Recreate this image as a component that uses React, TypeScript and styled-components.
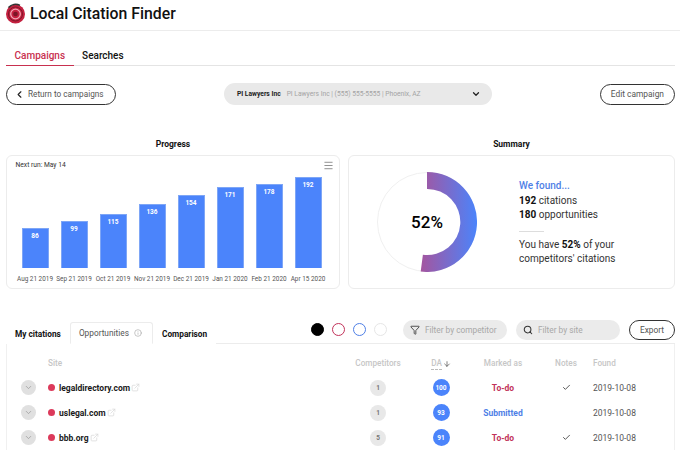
import styled, { createGlobalStyle } from 'styled-components'
import {
  ArrowDown,
  Check,
  ChevronDown,
  ChevronLeft,
  ExternalLink,
  Filter,
  Info,
  Menu,
  Search,
} from 'lucide-react'

const GlobalStyle = createGlobalStyle`
  html, body {
    margin: 0;
    padding: 0;
    height: 450px;
    overflow: hidden;
    background: #fff;
  }
  * {
    box-sizing: border-box;
  }
  body {
    font-family: Roboto, "Liberation Sans", sans-serif;
    color: #111;
  }
`

const Page = styled.div`
  width: 680px;
  height: 450px;
  overflow: hidden;
`

const Header = styled.header`
  height: 31px;
  padding: 0 0 3px 6px;
  display: flex;
  align-items: center;
  gap: 5px;
  border-bottom: 1px solid #ececec;
`

const Title = styled.h1`
  margin: 0 0 1px;
  font-size: 15.8px;
  font-weight: 500;
  color: #111;
`

const Main = styled.main`
  padding: 0 5px 0 6px;
`

const NavTabs = styled.nav`
  margin-top: 15px;
  height: 20px;
  display: flex;
  border-bottom: 1px solid #e4e4e4;
`

const NavTab = styled.div<{ $active?: boolean }>`
  padding: 0 8.5px;
  height: 20px;
  line-height: 20px;
  font-size: 10px;
  font-weight: 500;
  color: ${(p) => (p.$active ? '#c8304f' : '#111')};
  border-bottom: ${(p) => (p.$active ? '1px solid #c8304f' : 'none')};
`

const Toolbar = styled.div`
  margin-top: 17px;
  display: flex;
  align-items: center;
  justify-content: space-between;
`

const OutlineButton = styled.button`
  height: 21px;
  padding: 0 10px;
  display: flex;
  align-items: center;
  gap: 6px;
  border: 1px solid #333;
  border-radius: 11px;
  background: #fff;
  font-family: inherit;
  font-size: 8.4px;
  color: #555;
`

const BackButton = styled(OutlineButton)`
  width: 110px;
  padding: 0 0 0 7px;
  gap: 3px;
  font-size: 8.2px;
`

const CampaignSelect = styled.div`
  width: 268px;
  height: 22px;
  padding: 0 11px 0 13px;
  display: flex;
  align-items: center;
  gap: 6px;
  border-radius: 11px;
  background: #e9e9e9;
  font-size: 6.7px;
`

const CampaignName = styled.span`
  font-weight: 700;
  color: #222;
`

const CampaignInfo = styled.span`
  flex: 1;
  color: #a4a4a4;
`

const Panels = styled.section`
  margin-top: 34px;
  display: grid;
  grid-template-columns: 334px 327px;
  column-gap: 8px;
`

const Panel = styled.div`
  display: flex;
  flex-direction: column;
  gap: 5px;
`

const PanelTitle = styled.h2`
  margin: 0;
  height: 11px;
  line-height: 11px;
  text-align: center;
  font-size: 8.5px;
  font-weight: 700;
  color: #111;
`

const Card = styled.div`
  height: 134px;
  border: 1px solid #ececec;
  border-radius: 6px;
  background: #fff;
`

const ChartCard = styled(Card)`
  padding: 3px 5px 0 8.5px;
  display: flex;
  flex-direction: column;
`

const ChartTop = styled.div`
  height: 12px;
  display: flex;
  align-items: center;
  justify-content: space-between;
  font-size: 6.7px;
  color: #333;
`

const Plot = styled.div`
  height: 91px;
  margin-top: 6px;
  display: flex;
  align-items: flex-end;
`

const BarSlot = styled.div`
  width: 39px;
  display: flex;
  justify-content: center;
  flex: none;
`

const Bar = styled.div`
  width: 27px;
  padding-top: 3px;
  background: #4b84fb;
  border: 1px solid #7ea6f6;
  border-bottom: none;
  text-align: center;
  font-size: 6.5px;
  font-weight: 700;
  color: #fff;
`

const AxisLabels = styled.div`
  margin-top: 7px;
  display: flex;
`

const AxisLabel = styled.div`
  width: 39px;
  flex: none;
  text-align: center;
  white-space: nowrap;
  font-size: 6.4px;
  color: #555;
`

const SummaryCard = styled(Card)`
  padding: 16px 0 0 28px;
  display: flex;
  gap: 42px;
`

const DonutWrap = styled.div`
  position: relative;
  width: 100px;
  height: 100px;
  flex: none;
`

const DonutLabel = styled.div`
  position: absolute;
  inset: 0;
  display: flex;
  align-items: center;
  justify-content: center;
  font-size: 17px;
  font-weight: 500;
  color: #000;
`

const SummaryText = styled.div`
  padding-top: 7px;
  font-size: 10px;
  line-height: 14.6px;
  color: #333;
`

const Found = styled.div`
  font-weight: 500;
  color: #4f7fe6;
`

const Divider = styled.div`
  width: 25px;
  height: 1px;
  margin: 8px 0 6px;
  background: #ddd;
`

const Strong = styled.b`
  font-weight: 700;
  color: #111;
`

const TabBar = styled.div`
  margin-top: 30px;
  height: 25px;
  display: flex;
  align-items: flex-end;
  border-bottom: 1px solid #ececec;
`

const DataTab = styled.div<{ $active?: boolean }>`
  height: ${(p) => (p.$active ? '22px' : '21px')};
  padding: 0 ${(p) => (p.$active ? '10px' : '8px')} 0 8px;
  display: flex;
  align-items: center;
  gap: 5px;
  font-size: ${(p) => (p.$active ? '8.3px' : '8.3px')};
  font-weight: ${(p) => (p.$active ? 400 : 700)};
  color: ${(p) => (p.$active ? '#555' : '#111')};
  background: #fff;
  margin-bottom: -1px;
  border: 1px solid ${(p) => (p.$active ? '#ececec' : 'transparent')};
  border-bottom: 1px solid ${(p) => (p.$active ? '#fff' : 'transparent')};
  border-radius: 3px 3px 0 0;
`

const Legend = styled.div`
  margin: 0 16px 7px auto;
  display: flex;
  gap: 8px;
`

const Swatch = styled.span<{ $color: string; $filled?: boolean }>`
  width: 13px;
  height: 13px;
  border-radius: 50%;
  border: 1px solid ${(p) => p.$color};
  background: ${(p) => (p.$filled ? p.$color : '#fff')};
`

const Filters = styled.div`
  margin-bottom: 3px;
  display: flex;
  gap: 9px;
`

const FilterPill = styled.div`
  width: 104px;
  height: 20px;
  padding: 0 6px 0 7px;
  display: flex;
  align-items: center;
  gap: 5px;
  border-radius: 10px;
  background: #ebebeb;
  font-size: 8.3px;
  color: #a8a8a8;
`

const ExportButton = styled(OutlineButton)`
  height: 20px;
  width: 46px;
  padding: 0;
  justify-content: center;
`

const Table = styled.div`
  border-left: 1px solid #f0f0f0;
  border-right: 1px solid #f0f0f0;
  height: 120px;
`

const gridColumns = '41px 302px 56px 7px 56px 1px 66px 10px 40px 7px 1fr'

const HeadRow = styled.div`
  height: 31px;
  padding-top: 14px;
  display: grid;
  grid-template-columns: ${gridColumns};
  align-items: start;
  font-size: 8.2px;
  font-weight: 500;
  color: #c6c6c6;
`

const Row = styled.div`
  height: 25px;
  display: grid;
  grid-template-columns: ${gridColumns};
  align-items: center;
  font-size: 8.5px;
`

const Cell = styled.div<{ $col: number; $center?: boolean }>`
  grid-column: ${(p) => p.$col};
  display: flex;
  align-items: center;
  justify-content: ${(p) => (p.$center ? 'center' : 'flex-start')};
`

const SortLabel = styled.span`
  border-bottom: 1px dashed #bbb;
  padding-bottom: 1px;
  margin-right: 1px;
`

const ExpandButton = styled.span`
  width: 15px;
  height: 15px;
  margin-left: 14px;
  display: flex;
  align-items: center;
  justify-content: center;
  border-radius: 50%;
  background: #e0e0e0;
  color: #999;
`

const Dot = styled.span`
  width: 7px;
  height: 7px;
  margin-right: 4px;
  border-radius: 50%;
  background: #dc3a5b;
`

const SiteName = styled.span`
  font-size: 8.5px;
  font-weight: 700;
  color: #1a1a1a;
  margin-right: 1px;
`

const CompetitorBadge = styled.span`
  width: 16px;
  height: 16px;
  display: flex;
  align-items: center;
  justify-content: center;
  border-radius: 50%;
  background: #e8e8e8;
  font-size: 6.5px;
  font-weight: 700;
  color: #777;
`

const ScoreBadge = styled.span`
  width: 17px;
  height: 17px;
  display: flex;
  align-items: center;
  justify-content: center;
  border-radius: 50%;
  background: #4b84fb;
  font-size: 6.5px;
  font-weight: 700;
  color: #fff;
`

const Status = styled.span<{ $submitted?: boolean }>`
  font-size: 8.5px;
  font-weight: 700;
  color: ${(p) => (p.$submitted ? '#4f7fe6' : '#c2325a')};
`

const DateText = styled.span`
  font-size: 8.5px;
  color: #555;
`

const months = [
  { label: 'Aug 21 2019', value: 86, height: 40 },
  { label: 'Sep 21 2019', value: 99, height: 47 },
  { label: 'Oct 21 2019', value: 115, height: 54 },
  { label: 'Nov 21 2019', value: 136, height: 64 },
  { label: 'Dec 21 2019', value: 154, height: 73 },
  { label: 'Jan 21 2020', value: 171, height: 81 },
  { label: 'Feb 21 2020', value: 178, height: 84 },
  { label: 'Apr 15 2020', value: 192, height: 91 },
]

const sites = [
  { site: 'legaldirectory.com', competitors: 1, da: 100, status: 'To-do', notes: true },
  { site: 'uslegal.com', competitors: 1, da: 93, status: 'Submitted', notes: false },
  { site: 'bbb.org', competitors: 5, da: 91, status: 'To-do', notes: true },
]

const Logo = () => (
  <svg width="19" height="21" viewBox="0 0 19 21">
    <circle cx="9.5" cy="11" r="9.5" fill="#c4203f" />
    <circle cx="9.5" cy="11" r="7" fill="none" stroke="#7d1729" strokeWidth="1" />
    <circle cx="9.5" cy="11" r="4.8" fill="none" stroke="#f2a9b6" strokeWidth="1.3" />
    <circle cx="9.5" cy="11" r="2.3" fill="#7a1526" />
    <path d="M2.5 4.5 A9.6 9.6 0 0 1 14 2.4" fill="none" stroke="#333" strokeWidth="1.5" />
  </svg>
)

const Donut = () => (
  <svg width="100" height="100" viewBox="0 0 100 100">
    <defs>
      <linearGradient id="ring" x1="0" y1="0" x2="1" y2="0">
        <stop offset="0" stopColor="#a4559f" />
        <stop offset="1" stopColor="#4b84fb" />
      </linearGradient>
    </defs>
    <circle cx="50" cy="50" r="49.5" fill="none" stroke="#f0f0f0" strokeWidth="1" />
    <path
      d="M50 0 A50 50 0 1 1 43.7 99.6 L45.9 82.7 A33 33 0 1 0 50 17 Z"
      fill="url(#ring)"
    />
  </svg>
)

const App = () => {
  return (
    <Page>
      <GlobalStyle />
      <Header>
        <Logo />
        <Title>Local Citation Finder</Title>
      </Header>
      <Main>
        <NavTabs>
          <NavTab $active>Campaigns</NavTab>
          <NavTab>Searches</NavTab>
        </NavTabs>
        <Toolbar>
          <BackButton>
            <ChevronLeft size={11} color="#222" strokeWidth={2.5} />
            Return to campaigns
          </BackButton>
          <CampaignSelect>
            <CampaignName>PI Lawyers Inc</CampaignName>
            <CampaignInfo>PI Lawyers Inc | (555) 555-5555 | Phoenix, AZ</CampaignInfo>
            <ChevronDown size={10} color="#222" strokeWidth={3} />
          </CampaignSelect>
          <OutlineButton>Edit campaign</OutlineButton>
        </Toolbar>
        <Panels>
          <Panel>
            <PanelTitle>Progress</PanelTitle>
            <ChartCard>
              <ChartTop>
                Next run: May 14
                <Menu size={11} color="#888" />
              </ChartTop>
              <Plot>
                {months.map((m) => (
                  <BarSlot key={m.label}>
                    <Bar style={{ height: m.height }}>{m.value}</Bar>
                  </BarSlot>
                ))}
              </Plot>
              <AxisLabels>
                {months.map((m) => (
                  <AxisLabel key={m.label}>{m.label}</AxisLabel>
                ))}
              </AxisLabels>
            </ChartCard>
          </Panel>
          <Panel>
            <PanelTitle>Summary</PanelTitle>
            <SummaryCard>
              <DonutWrap>
                <Donut />
                <DonutLabel>52%</DonutLabel>
              </DonutWrap>
              <SummaryText>
                <Found>We found...</Found>
                <div>
                  <Strong>192</Strong> citations
                </div>
                <div>
                  <Strong>180</Strong> opportunities
                </div>
                <Divider />
                <div>
                  You have <Strong>52%</Strong> of your
                </div>
                <div>competitors' citations</div>
              </SummaryText>
            </SummaryCard>
          </Panel>
        </Panels>
        <TabBar>
          <DataTab>My citations</DataTab>
          <DataTab $active>
            Opportunities
            <Info size={8} color="#aaa" />
          </DataTab>
          <DataTab>Comparison</DataTab>
          <Legend>
            <Swatch $color="#000" $filled />
            <Swatch $color="#c2325a" />
            <Swatch $color="#4f7fe6" />
            <Swatch $color="#e6e6e6" />
          </Legend>
          <Filters>
            <FilterPill>
              <Filter size={10} color="#333" />
              Filter by competitor
            </FilterPill>
            <FilterPill>
              <Search size={10} color="#333" strokeWidth={2.5} />
              Filter by site
            </FilterPill>
            <ExportButton>Export</ExportButton>
          </Filters>
        </TabBar>
        <Table>
          <HeadRow>
            <Cell $col={2}>Site</Cell>
            <Cell $col={3} $center>
              Competitors
            </Cell>
            <Cell $col={5} $center>
              <SortLabel>DA</SortLabel>
              <ArrowDown size={8} color="#444" />
            </Cell>
            <Cell $col={7} $center>
              Marked as
            </Cell>
            <Cell $col={9} $center>
              Notes
            </Cell>
            <Cell $col={11}>Found</Cell>
          </HeadRow>
          {sites.map((s) => (
            <Row key={s.site}>
              <Cell $col={1}>
                <ExpandButton>
                  <ChevronDown size={9} />
                </ExpandButton>
              </Cell>
              <Cell $col={2}>
                <Dot />
                <SiteName>{s.site}</SiteName>
                <ExternalLink size={9} color="#d8d8d8" />
              </Cell>
              <Cell $col={3} $center>
                <CompetitorBadge>{s.competitors}</CompetitorBadge>
              </Cell>
              <Cell $col={5} $center>
                <ScoreBadge>{s.da}</ScoreBadge>
              </Cell>
              <Cell $col={7} $center>
                <Status $submitted={s.status === 'Submitted'}>{s.status}</Status>
              </Cell>
              <Cell $col={9} $center>
                {s.notes && <Check size={9} color="#222" />}
              </Cell>
              <Cell $col={11}>
                <DateText>2019-10-08</DateText>
              </Cell>
            </Row>
          ))}
        </Table>
      </Main>
    </Page>
  )
}

export default App
